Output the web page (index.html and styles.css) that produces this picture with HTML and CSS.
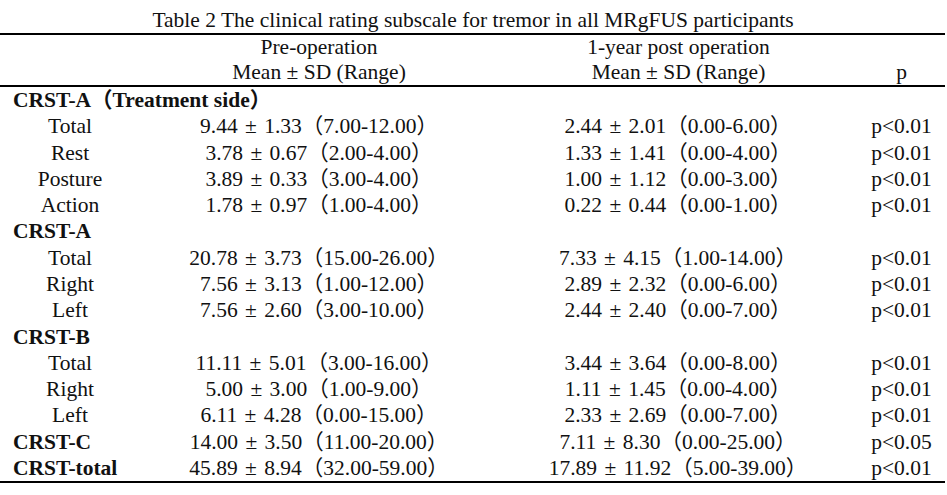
FILE: index.html
```html
<!DOCTYPE html>
<html>
<head>
<meta charset="utf-8">
<link rel="stylesheet" href="styles.css">
</head>
<body>
<div class="page">
  <div class="caption">Table 2 The clinical rating subscale for tremor in all MRgFUS participants</div>
  <table class="data">
    <colgroup>
      <col class="c-label"><col class="c-pre"><col class="c-post"><col class="c-p">
    </colgroup>
    <thead>
      <tr class="h1">
        <th></th>
        <th class="hpre">Pre-operation</th>
        <th class="hpost">1-year post operation</th>
        <th></th>
      </tr>
      <tr class="h2">
        <th></th>
        <th class="hpre">Mean ± SD (Range)</th>
        <th class="hpost">Mean ± SD (Range)</th>
        <th>p</th>
      </tr>
    </thead>
    <tbody>
      <tr class="grp"><td colspan="4">CRST-A（Treatment side）</td></tr>
      <tr><td>Total</td><td class="v">9.44 ± 1.33（7.00-12.00）</td><td class="v">2.44 ± 2.01（0.00-6.00）</td><td>p&lt;0.01</td></tr>
      <tr><td>Rest</td><td class="v">3.78 ± 0.67（2.00-4.00）</td><td class="v">1.33 ± 1.41（0.00-4.00）</td><td>p&lt;0.01</td></tr>
      <tr><td>Posture</td><td class="v">3.89 ± 0.33（3.00-4.00）</td><td class="v">1.00 ± 1.12（0.00-3.00）</td><td>p&lt;0.01</td></tr>
      <tr><td>Action</td><td class="v">1.78 ± 0.97（1.00-4.00）</td><td class="v">0.22 ± 0.44（0.00-1.00）</td><td>p&lt;0.01</td></tr>
      <tr class="grp"><td colspan="4">CRST-A</td></tr>
      <tr><td>Total</td><td class="v">20.78 ± 3.73（15.00-26.00）</td><td class="v">7.33 ± 4.15（1.00-14.00）</td><td>p&lt;0.01</td></tr>
      <tr><td>Right</td><td class="v">7.56 ± 3.13（1.00-12.00）</td><td class="v">2.89 ± 2.32（0.00-6.00）</td><td>p&lt;0.01</td></tr>
      <tr><td>Left</td><td class="v">7.56 ± 2.60（3.00-10.00）</td><td class="v">2.44 ± 2.40（0.00-7.00）</td><td>p&lt;0.01</td></tr>
      <tr class="grp"><td colspan="4">CRST-B</td></tr>
      <tr><td>Total</td><td class="v">11.11 ± 5.01（3.00-16.00）</td><td class="v">3.44 ± 3.64（0.00-8.00）</td><td>p&lt;0.01</td></tr>
      <tr><td>Right</td><td class="v">5.00 ± 3.00（1.00-9.00）</td><td class="v">1.11 ± 1.45（0.00-4.00）</td><td>p&lt;0.01</td></tr>
      <tr><td>Left</td><td class="v">6.11 ± 4.28（0.00-15.00）</td><td class="v">2.33 ± 2.69（0.00-7.00）</td><td>p&lt;0.01</td></tr>
      <tr><td class="b">CRST-C</td><td class="v">14.00 ± 3.50（11.00-20.00）</td><td class="v">7.11 ± 8.30（0.00-25.00）</td><td>p&lt;0.05</td></tr>
      <tr><td class="b">CRST-total</td><td class="v">45.89 ± 8.94（32.00-59.00）</td><td class="v">17.89 ± 11.92（5.00-39.00）</td><td>p&lt;0.01</td></tr>
    </tbody>
  </table>
</div>
</body>
</html>
```
FILE: styles.css
```css
html, body {
  margin: 0;
  padding: 0;
  background: #ffffff;
}
.page {
  width: 945px;
  font-family: "Liberation Serif", "Noto Sans CJK SC", serif;
  font-size: 21.5px;
  color: #111111;
}
.caption {
  text-align: center;
  height: 26px;
  line-height: 26px;
  padding-top: 7px;
  padding-left: 1px;
  white-space: nowrap;
}
.data {
  width: 945px;
  border-collapse: collapse;
  table-layout: fixed;
  border-top: 2px solid #000;
  border-bottom: 2px solid #000;
}
.c-label { width: 140px; }
.c-pre { width: 344px; }
.c-post { width: 374px; }
.c-p { width: 87px; }
.data th {
  font-weight: normal;
  height: 25px;
  line-height: 25px;
  padding: 0;
  text-align: center;
  white-space: nowrap;
}
.data thead tr.h2 th {
  border-bottom: 2px solid #000;
}
.data th.hpre { padding-left: 14px; }
.data th.hpost { padding-left: 15px; }
.data td {
  height: 26.27px;
  line-height: 26px;
  padding: 0;
  text-align: center;
  white-space: nowrap;
}
.data td.v {
  padding-left: 14px;
  word-spacing: 2px;
}
.data tr.grp td {
  text-align: left;
  padding-left: 13px;
  font-weight: bold;
}
.data td.b {
  text-align: left;
  padding-left: 13px;
  font-weight: bold;
}
```
